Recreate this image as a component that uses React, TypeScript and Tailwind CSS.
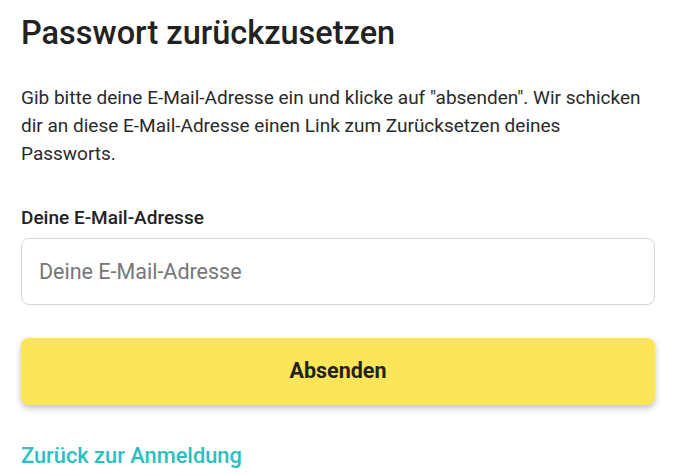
export default function App() {
  return (
    <div
      className="w-[682px] h-[475px] bg-white overflow-hidden"
      style={{ fontFamily: "Roboto, 'Liberation Sans', sans-serif" }}
    >
      <div className="w-[634px] ml-[21px] pt-[13px]">
        <h1 className="text-[32.5px] leading-[40px] font-medium text-[#222]">Passwort zurückzusetzen</h1>

        <p className="mt-[31px] text-[19px] leading-[28px] text-[#2a2a2a]">
          Gib bitte deine E-Mail-Adresse ein und klicke auf "absenden". Wir schicken dir an diese
          E-Mail-Adresse einen Link zum Zurücksetzen deines Passworts.
        </p>

        <form className="mt-[38px]" onSubmit={(e) => e.preventDefault()}>
          <label htmlFor="email" className="block text-[19px] leading-[24px] font-medium text-[#222]">
            Deine E-Mail-Adresse
          </label>
          <input
            id="email"
            type="email"
            placeholder="Deine E-Mail-Adresse"
            className="mt-[8px] block w-full h-[67px] px-[17px] rounded-lg border border-[#d6d6d6] text-[21.5px] text-[#222] placeholder:text-[#777] focus:outline-none"
          />

          <button
            type="submit"
            className="mt-[33px] w-full h-[67px] rounded-lg bg-[#fde55a] text-[21.5px] font-bold text-[#222] shadow-[0_3px_6px_rgba(0,0,0,0.25)]"
          >
            Absenden
          </button>
        </form>

        <a href="#" className="block mt-[37px] text-[21.8px] leading-[28px] font-medium text-[#2bbfc0]">
          Zurück zur Anmeldung
        </a>
      </div>
    </div>
  );
}
